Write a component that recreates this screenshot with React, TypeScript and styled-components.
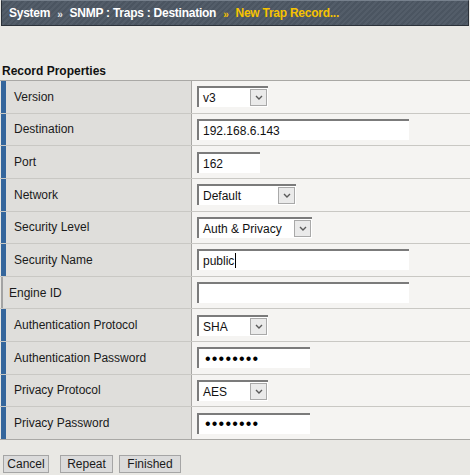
import React from "react";
import styled, {createGlobalStyle} from "styled-components";

const GlobalStyle = createGlobalStyle`
    html, body {
        margin: 0;
        padding: 0;
        background: #e9e8e4;
        font-family: "Liberation Sans", Arial, sans-serif;
        font-size: 12px;
        color: #1a1a1a;
    }
`

const Page = styled.div`
    width: 470px;
    height: 475px;
    overflow: hidden;
`

const TitleBar = styled.div`
    box-sizing: border-box;
    height: 26px;
    margin: 0 1px;
    padding-left: 7px;
    display: flex;
    align-items: center;
    border: 1px solid #2b3139;
    border-top-color: #76808c;
    background: repeating-linear-gradient(135deg, #535d69 0 2px, #4b5561 2px 4px);
    font-weight: bold;
    letter-spacing: -0.25px;
    color: #ffffff;
    white-space: nowrap;
`

const Sep = styled.span<{ $active?: boolean }>`
    padding: 0 7px 0 7px;
    font-size: 10px;
    position: relative;
    top: 1px;
    color: ${p => p.$active ? '#f3c000' : '#e6e6e6'};
`

const Current = styled.span`
    color: #f7c300;
`

const SectionTitle = styled.div`
    margin-top: 36px;
    height: 18px;
    line-height: 18px;
    padding-left: 2px;
    font-weight: bold;
    color: #111;
`

const Table = styled.div`
    border-top: 1px solid #a9a8a5;
`

const Row = styled.div`
    box-sizing: border-box;
    height: 32.64px;
    display: grid;
    grid-template-columns: 192px 1fr;
    border-bottom: 1px solid #c9c8c4;
    &:last-child {
        border-bottom-color: #a9a8a5;
    }
`

const Label = styled.div<{ $required?: boolean }>`
    display: flex;
    align-items: center;
    margin-left: 1px;
    padding-left: ${p => p.$required ? 8 : 6}px;
    border-left: ${p => p.$required ? '5px solid #35669c' : '2px solid #a3a3a3'};
    border-right: 1px solid #a8a7a4;
    background: #dfdedb;
    color: #1a1a1a;
`

const Value = styled.div`
    display: flex;
    align-items: center;
    padding-left: 5px;
    background: #f5f4f2;
`

const Field = styled.div`
    position: relative;
    display: flex;
`

const TextInput = styled.input<{ $w: number }>`
    box-sizing: border-box;
    width: ${p => p.$w}px;
    height: 21px;
    margin: 0;
    padding: 1px 0 0 4px;
    border: none;
    border-top: 2px solid #7b7b7b;
    border-left: 2px solid #7b7b7b;
    background: #ffffff;
    font-family: "Liberation Sans", Arial, sans-serif;
    font-size: 12px;
    color: #111;
    outline: none;
`

const PassInput = styled(TextInput)`
    padding: 0 0 0 6px;
    font-size: 16px;
    letter-spacing: 1.2px;
    color: #000;
`

const Caret = styled.span<{ $x: number }>`
    position: absolute;
    left: ${p => p.$x}px;
    top: 4px;
    width: 1px;
    height: 15px;
    background: #000;
`

const SelectBox = styled.div<{ $w: number }>`
    box-sizing: border-box;
    width: ${p => p.$w}px;
    height: 21px;
    display: flex;
    align-items: center;
    justify-content: space-between;
    padding: 0 1px 0 4px;
    border-top: 2px solid #7b7b7b;
    border-left: 2px solid #7b7b7b;
    background: #ffffff;
    color: #111;
`

const SelectText = styled.span`
    padding-top: 1px;
`

const DropButton = styled.span`
    box-sizing: border-box;
    width: 17px;
    height: 17px;
    display: flex;
    align-items: center;
    justify-content: center;
    border: 1px solid #a9a9a9;
    background: #eaeaea;
`

const ButtonBar = styled.div`
    display: flex;
    margin-top: 15px;
    padding-left: 3px;
`

const Button = styled.button<{ $w: number; $gap?: number }>`
    box-sizing: border-box;
    width: ${p => p.$w}px;
    height: 18px;
    margin: 0 0 0 ${p => p.$gap ?? 0}px;
    padding: 0;
    border: 1px solid #a5a5a5;
    background: #dbdbdb;
    font-family: "Liberation Sans", Arial, sans-serif;
    font-size: 12px;
    color: #1a1a1a;
    cursor: pointer;
`

function Chevron() {
    return <svg width="8" height="5" viewBox="0 0 8 5">
        <polyline points="1,1 4,4 7,1" fill="none" stroke="#5a5a5a" strokeWidth="1.4"/>
    </svg>
}

function Select({value, width}) {
    return <SelectBox $w={width}>
        <SelectText>{value}</SelectText>
        <DropButton><Chevron/></DropButton>
    </SelectBox>
}

const rows = [
    {label: 'Version', required: true, kind: 'select', value: 'v3', width: 71},
    {label: 'Destination', required: true, kind: 'text', value: '192.168.6.143', width: 212},
    {label: 'Port', required: true, kind: 'text', value: '162', width: 63},
    {label: 'Network', required: true, kind: 'select', value: 'Default', width: 99},
    {label: 'Security Level', required: true, kind: 'select', value: 'Auth & Privacy', width: 115},
    {label: 'Security Name', required: true, kind: 'text', value: 'public', width: 212, caret: 38},
    {label: 'Engine ID', required: false, kind: 'text', value: '', width: 212},
    {label: 'Authentication Protocol', required: true, kind: 'select', value: 'SHA', width: 71},
    {label: 'Authentication Password', required: true, kind: 'password', value: 'secret12', width: 113},
    {label: 'Privacy Protocol', required: true, kind: 'select', value: 'AES', width: 71},
    {label: 'Privacy Password', required: true, kind: 'password', value: 'secret34', width: 113},
];

function FieldFor({row}) {
    if (row.kind === 'select') return <Select value={row.value} width={row.width}/>;
    if (row.kind === 'password') return <PassInput type="password" $w={row.width} defaultValue={row.value}/>;
    return <Field>
        <TextInput type="text" $w={row.width} defaultValue={row.value}/>
        {row.caret && <Caret $x={row.caret}/>}
    </Field>
}

const App = () => {
    return <Page>
        <GlobalStyle/>
        <TitleBar>
            System<Sep>»</Sep>SNMP : Traps : Destination<Sep $active>»</Sep><Current>New Trap Record...</Current>
        </TitleBar>
        <SectionTitle>Record Properties</SectionTitle>
        <Table>
            {rows.map(row => <Row key={row.label}>
                <Label $required={row.required}>{row.label}</Label>
                <Value><FieldFor row={row}/></Value>
            </Row>)}
        </Table>
        <ButtonBar>
            <Button $w={46}>Cancel</Button>
            <Button $w={53} $gap={11}>Repeat</Button>
            <Button $w={62} $gap={6}>Finished</Button>
        </ButtonBar>
    </Page>
};

export default App;
